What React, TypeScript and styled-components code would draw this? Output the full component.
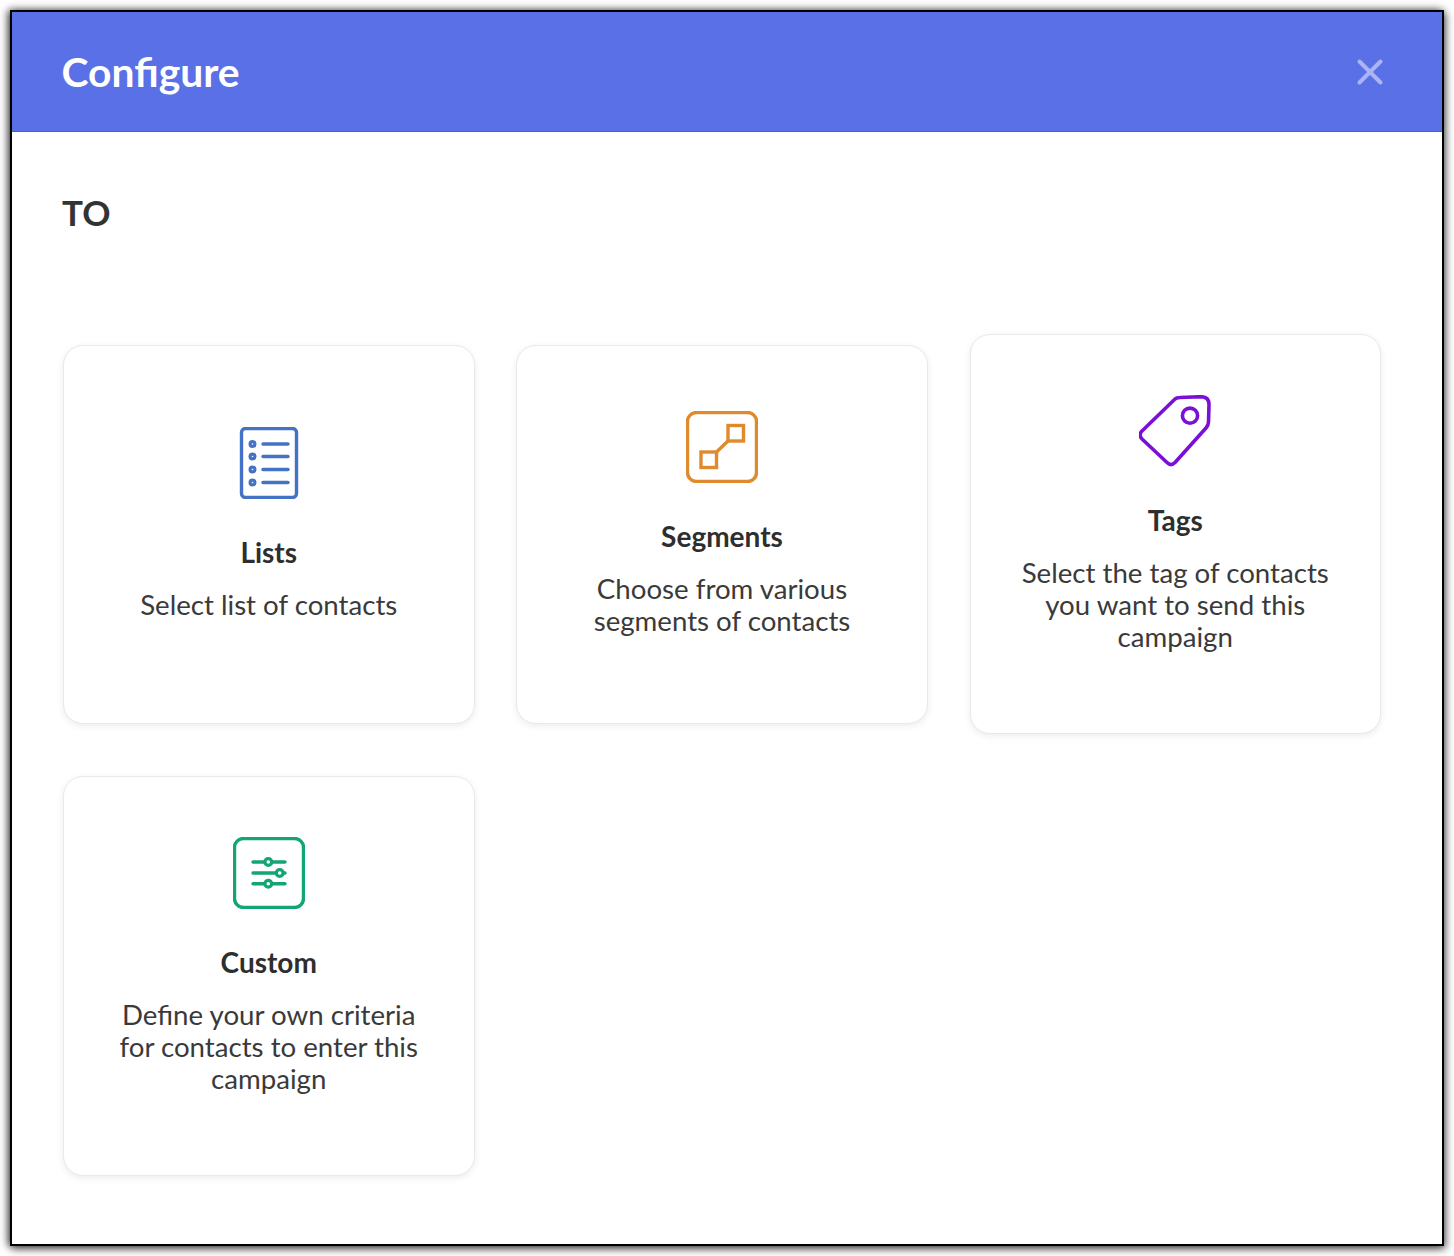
import React from "react";
import styled, { createGlobalStyle } from "styled-components";

const Global = createGlobalStyle`
  html, body { margin: 0; padding: 0; background: #fff; }
  body { font-family: Lato, "Open Sans", sans-serif; color: #333; }
`;

const Page = styled.div`
  padding: 10px;
  width: 1454px;
  height: 1256px;
  box-sizing: border-box;
`;

const Frame = styled.div`
  width: 1434px;
  height: 1236px;
  box-sizing: border-box;
  border: 2px solid #000;
  background: #fff;
  box-shadow: -2px 0 8px rgba(0, 0, 0, 0.7), 2px 3px 8px rgba(0, 0, 0, 0.5);
`;

const Header = styled.header`
  height: 120px;
  box-sizing: border-box;
  background: #5a70e7;
  border-bottom: 1px solid #4b5fc4;
  padding: 0 58px 0 49.5px;
  display: flex;
  align-items: center;
  justify-content: space-between;
`;

const Title = styled.h1`
  margin: 2px 0 0;
  font-size: 40.8px;
  font-weight: 700;
  color: #fff;
  line-height: 1;
`;

const Close = styled.button`
  border: 0;
  padding: 0;
  background: none;
  width: 28px;
  height: 28px;
  display: flex;
`;

const Body = styled.main`
  padding: 59px 62px 0 51px;
`;

const Section = styled.h2`
  margin: 0 0 101px -1px;
  font-size: 35px;
  line-height: 42px;
  font-weight: 700;
  color: #333;
`;

const Grid = styled.div`
  display: grid;
  grid-template-columns: repeat(3, 411.5px);
  column-gap: 41.75px;
  row-gap: 42px;
  align-items: center;
`;

const Card = styled.article`
  box-sizing: border-box;
  min-height: 379px;
  padding: 60px 40px 62px;
  border: 1px solid #e9e9e9;
  border-radius: 20px;
  background: #fff;
  box-shadow: 0 2px 7px rgba(0, 0, 0, 0.08);
  display: flex;
  flex-direction: column;
  align-items: center;
  justify-content: center;
  text-align: center;
`;

const IconBox = styled.svg`
  display: block;
  width: 72px;
  height: 72px;
  margin-bottom: 33px;
  fill: none;
`;

const CardTitle = styled.h3`
  margin: 0 0 17px;
  font-size: 28px;
  line-height: 40px;
  font-weight: 700;
  color: #2e2e2e;
`;

const CardText = styled.p`
  margin: 0 0 17.4px;
  font-size: 27.65px;
  line-height: 32.2px;
  font-weight: 400;
  color: #3a3a3a;
`;

const ListsIcon = () => (
  <IconBox viewBox="0 0 72 72" stroke="#4472c4" strokeWidth="3.4">
    <rect x="8.5" y="1.5" width="55" height="69" rx="4" />
    {[17, 29.5, 42.5, 55.5].map((y) => (
      <React.Fragment key={y}>
        <circle cx="19.5" cy={y} r="2.4" strokeWidth="3.2" />
        <line x1="30" x2="55" y1={y} y2={y} strokeLinecap="round" />
      </React.Fragment>
    ))}
  </IconBox>
);

const SegmentsIcon = () => (
  <IconBox viewBox="0 0 72 72" stroke="#e08a2e" strokeWidth="3.4">
    <rect x="1.5" y="1.5" width="69" height="69" rx="9" />
    <rect x="15" y="41" width="15.5" height="15.5" />
    <rect x="42" y="14.5" width="15.5" height="15.5" />
    <line x1="30.5" y1="41" x2="42" y2="30" />
  </IconBox>
);

const TagsIcon = () => (
  <IconBox viewBox="0 0 72 72" stroke="#7a10d8" strokeWidth="3.6">
    <path d="M35 5Q37 2.5 41 2.5L62 1.7Q70 1.7 70 9.5L69.5 27Q69.5 30 67 33L36 67.5Q32 71.5 28 67.5L3 44Q-1 40 3 36Z" strokeLinejoin="round" />
    <circle cx="51" cy="20.7" r="7.6" />
  </IconBox>
);

const CustomIcon = () => (
  <IconBox viewBox="0 0 72 72" stroke="#13a673" strokeWidth="3.4">
    <rect x="1.5" y="1.5" width="69" height="69" rx="9" />
    <g strokeLinecap="round">
      <line x1="20" x2="52" y1="25" y2="25" />
      <line x1="20" x2="52" y1="36" y2="36" />
      <line x1="20" x2="52" y1="46.7" y2="46.7" />
    </g>
    <g fill="#fff" strokeWidth="3.2">
      <circle cx="35.3" cy="25" r="3.4" />
      <circle cx="46.7" cy="36" r="3.4" />
      <circle cx="35.3" cy="46.7" r="3.4" />
    </g>
  </IconBox>
);

const options = [
  { title: "Lists", text: "Select list of contacts", icon: <ListsIcon /> },
  { title: "Segments", text: <>Choose from various<br />segments of contacts</>, icon: <SegmentsIcon /> },
  { title: "Tags", text: <>Select the tag of contacts<br />you want to send this<br />campaign</>, icon: <TagsIcon /> },
  { title: "Custom", text: <>Define your own criteria<br />for contacts to enter this<br />campaign</>, icon: <CustomIcon /> },
];

export default function App() {
  return (
    <Page>
      <Global />
      <Frame>
        <Header>
          <Title>Configure</Title>
          <Close aria-label="Close">
            <svg viewBox="0 0 28 28" width="28" height="28" fill="none" stroke="#abb5f6" strokeWidth="4" strokeLinecap="round">
              <path d="M3.5 3.5L24.5 24.5M24.5 3.5L3.5 24.5" />
            </svg>
          </Close>
        </Header>
        <Body>
          <Section>TO</Section>
          <Grid>
            {options.map((o) => (
              <Card key={o.title}>
                {o.icon}
                <CardTitle>{o.title}</CardTitle>
                <CardText>{o.text}</CardText>
              </Card>
            ))}
          </Grid>
        </Body>
      </Frame>
    </Page>
  );
}
